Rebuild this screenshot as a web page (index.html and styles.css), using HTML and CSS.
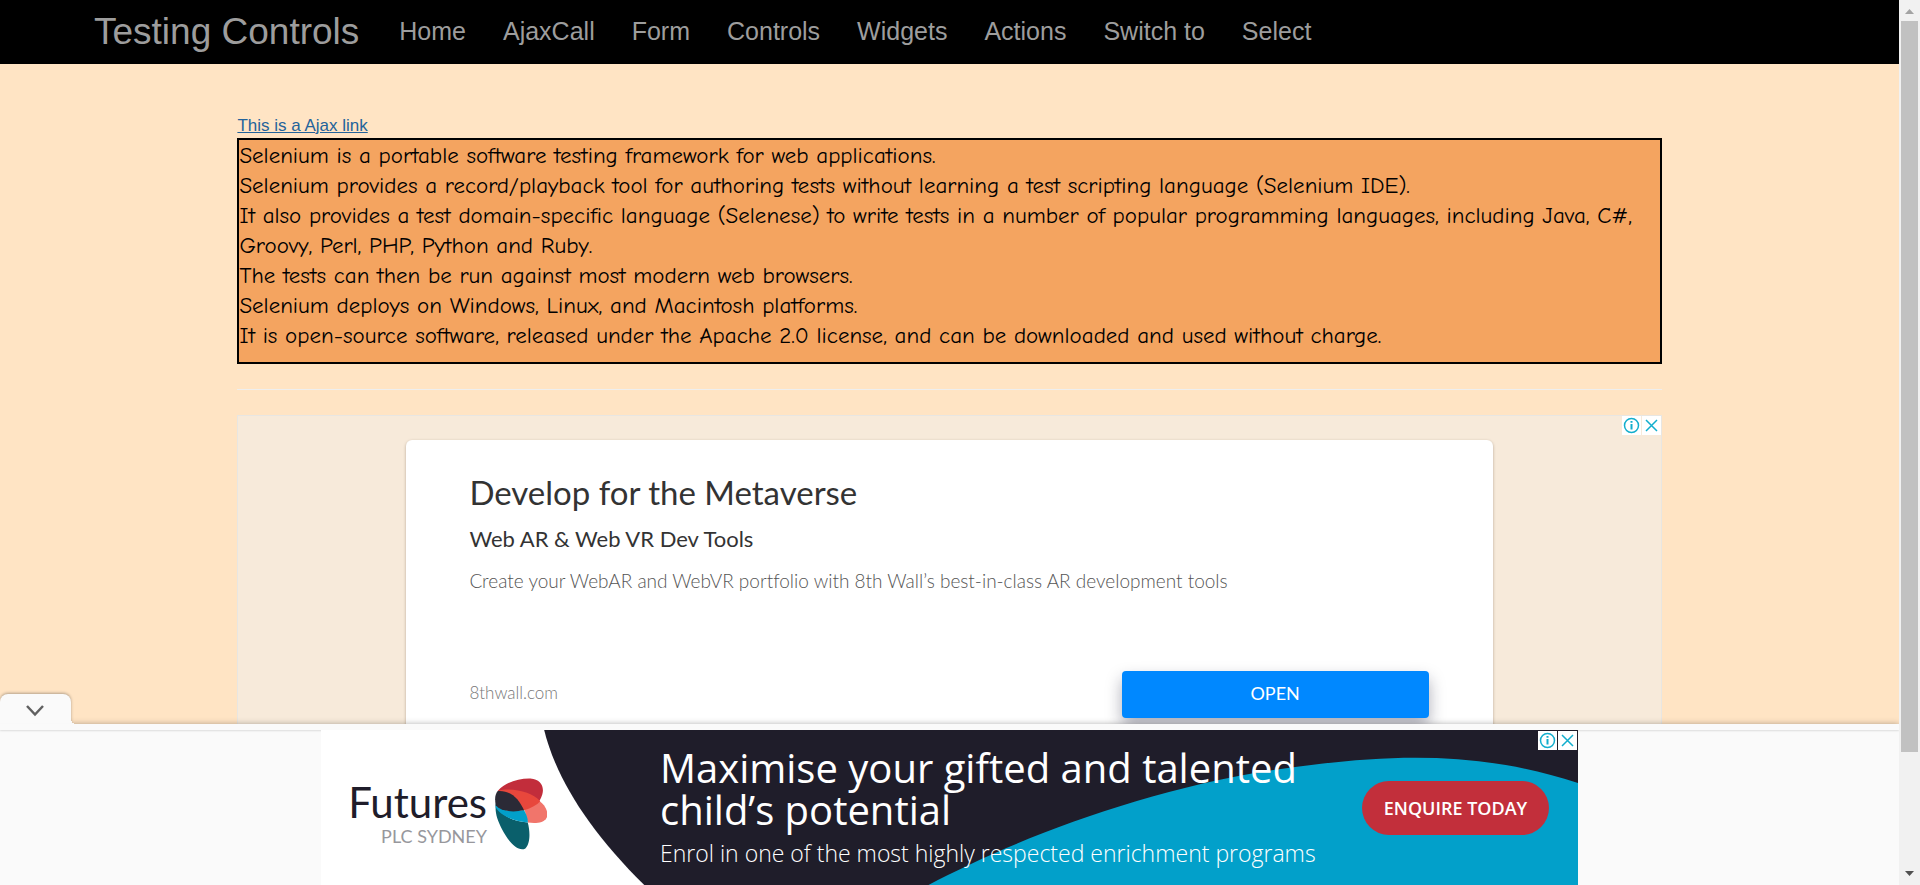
FILE: index.html
```html
<!DOCTYPE html>
<html lang="en">
<head>
<meta charset="utf-8">
<title>Testing Controls</title>
<link rel="stylesheet" href="styles.css">
</head>
<body>
<div class="window">
  <div class="page">
    <nav class="navbar">
      <a class="brand" href="#">Testing Controls</a>
      <ul class="menu">
        <li><a href="#">Home</a></li>
        <li><a href="#">AjaxCall</a></li>
        <li><a href="#">Form</a></li>
        <li><a href="#">Controls</a></li>
        <li><a href="#">Widgets</a></li>
        <li><a href="#">Actions</a></li>
        <li><a href="#">Switch to</a></li>
        <li><a href="#">Select</a></li>
      </ul>
    </nav>

    <main class="content">
      <a class="ajax-link" href="#">This is a Ajax link</a>
      <div class="result">
        Selenium is a portable software testing framework for web applications.<br>
        Selenium provides a record/playback tool for authoring tests without learning a test scripting language (Selenium IDE).<br>
        It also provides a test domain-specific language (Selenese) to write tests in a number of popular programming languages, including Java, C#,<br>
        Groovy, Perl, PHP, Python and Ruby.<br>
        The tests can then be run against most modern web browsers.<br>
        Selenium deploys on Windows, Linux, and Macintosh platforms.<br>
        It is open-source software, released under the Apache 2.0 license, and can be downloaded and used without charge.
      </div>
      <hr class="rule">

      <section class="ad">
        <div class="badges">
          <button class="badge" aria-label="About this ad"><svg viewBox="0 0 19 19"><circle cx="9.5" cy="9.5" r="7" /><path d="M9.500 8v5.500M9.500 5v1.800" stroke-width="2"/></svg></button>
          <button class="badge" aria-label="Close ad"><svg viewBox="0 0 19 19"><path d="M4 4l11 11M15 4l-11 11"/></svg></button>
        </div>
        <article class="card">
          <h2 class="card-title">Develop for the Metaverse</h2>
          <h3 class="card-subtitle">Web AR &amp; Web VR Dev Tools</h3>
          <p class="card-text">Create your WebAR and WebVR portfolio with 8th Wall’s best-in-class AR development tools</p>
          <div class="card-foot">
            <span class="card-site">8thwall.com</span>
            <button class="open">OPEN</button>
          </div>
        </article>
      </section>
    </main>

    <footer class="anchor">
      <button class="tab" aria-label="Collapse ad"><svg viewBox="0 0 20 14"><path d="M2 2l8 8.500 8-8.500"/></svg></button>
      <div class="anchor-edge"></div>
      <div class="banner">
        <svg class="banner-art" viewBox="321 730 1256 155" preserveAspectRatio="none" aria-hidden="true">
          <path fill="#1f1d2a" d="M544 730C556 779 590 832 644 885H1577V730Z"/>
          <path fill="#02a0ca" d="M928 885C1005 844 1140 789 1280 769C1390 753 1480 751 1577 783V885Z"/>
        </svg>
        <div class="logo">
          <div class="logo-words">
            <span class="logo-name">Futures</span>
            <span class="logo-place">PLC SYDNEY</span>
          </div>
          <svg class="emblem" viewBox="0 0 154 212" aria-hidden="true">
            <path fill="#f1756b" d="M88 95L130 66C150 80 160 103 153 117C144 134 117 134 97 131Z"/>
            <path fill="#c22d3b" d="M8 38C30 12 70 0 105 1C135 3 147 25 140 48C136 60 132 66 130 70L60 45Z"/>
            <path fill="#e8473c" d="M8 38C50 25 112 42 134 68C124 79 108 88 86 96C68 90 50 60 8 38Z"/>
            <path fill="#0a5f6b" d="M2 80C20 110 50 128 97 131C105 160 104 195 90 208C70 220 40 190 20 150C8 125 0 105 2 80Z"/>
            <path fill="#02a0ca" d="M2 76C25 100 50 100 86 94C94 110 98 120 97 131C50 127 15 109 2 86Z"/>
            <path fill="#2b2a36" d="M8 38C45 35 70 60 86 95C50 102 18 98 2 80C-1 60 0 48 8 38Z"/>
          </svg>
        </div>
        <div class="copy">
          <p class="headline">Maximise your gifted and talented<br>child’s potential</p>
          <p class="tagline">Enrol in one of the most highly respected enrichment programs</p>
        </div>
        <button class="enquire">ENQUIRE TODAY</button>
        <div class="badges">
          <button class="badge" aria-label="About this ad"><svg viewBox="0 0 19 19"><circle cx="9.5" cy="9.5" r="7" /><path d="M9.500 8v5.500M9.500 5v1.800" stroke-width="2"/></svg></button>
          <button class="badge" aria-label="Close ad"><svg viewBox="0 0 19 19"><path d="M4 4l11 11M15 4l-11 11"/></svg></button>
        </div>
      </div>
    </footer>
  </div>

  <div class="scrollbar" aria-hidden="true">
    <svg class="arrow" viewBox="0 0 21 21"><path fill="#a3a3a3" d="M6 14h9l-4.500-5z"/></svg>
    <div class="track"><div class="thumb"></div></div>
    <svg class="arrow" viewBox="0 0 21 21"><path fill="#505050" d="M6 7h9l-4.500 5z"/></svg>
  </div>
</div>
</body>
</html>
```

FILE: styles.css
```css
* { box-sizing: border-box; }

body {
  margin: 0;
  background: #ffe4c4;
  font-family: "Liberation Sans", Arial, sans-serif;
}

button {
  border: 0;
  padding: 0;
  font: inherit;
  cursor: pointer;
}

h2, h3, p { margin: 0; }

.window {
  display: flex;
  height: 100vh;
}

.page {
  position: relative;
  flex: 1;
  min-width: 0;
  display: flex;
  flex-direction: column;
  overflow: hidden;
}

/* Navigation */
.navbar {
  flex: none;
  display: flex;
  align-items: flex-start;
  gap: 40px;
  height: 64px;
  padding-left: 94px;
  background: #000;
}

.navbar a {
  color: #9d9d9d;
  text-decoration: none;
}

.brand {
  font-size: 37px;
  line-height: 64px;
}

.menu {
  display: flex;
  gap: 37px;
  margin: 0;
  padding: 0;
  list-style: none;
  font-size: 25px;
  line-height: 62px;
}

/* Main column */
.content {
  flex: 1;
  min-height: 0;
  display: flex;
  flex-direction: column;
  padding: 49px 12.5% 0;
  overflow: hidden;
}

.ajax-link {
  align-self: flex-start;
  font-size: 17px;
  line-height: 25px;
  color: #23639b;
  text-decoration: underline;
}

.result {
  flex: none;
  padding: 1px 0 11px;
  border: 2px solid #000;
  background: #f4a460;
  color: #000;
  font-family: "Comic Sans MS", "Comic Neue", "Noto Sans", sans-serif;
  font-size: 23px;
  font-variant-ligatures: none;
  line-height: 30px;
  white-space: nowrap;
}

.rule {
  flex: none;
  width: 100%;
  height: 1px;
  margin: 25px 0;
  border: 0;
  background: #eee;
}

/* In-page advert */
.ad {
  position: relative;
  flex: 1 0 auto;
  padding: 24px 168px 0;
  border: 1px solid #e8e6e2;
  background: #f7eada;
}

.badges {
  position: absolute;
  top: 0;
  right: 0;
  display: flex;
  gap: 1px;
}

.badge {
  width: 19px;
  height: 19px;
  background: #fff;
}

.badge svg {
  display: block;
  fill: none;
  stroke: #12aecd;
  stroke-width: 1.500;
}

.card {
  height: 100%;
  min-height: 300px;
  padding: 32px 64px 32px 63px;
  border-radius: 6px;
  background: #fff;
  box-shadow: 0 1px 3px rgba(60, 40, 20, 0.35);
  font-family: Lato, "Open Sans", sans-serif;
  font-variant-ligatures: none;
  color: #333;
}

.card-title {
  font-size: 33px;
  font-weight: 400;
  line-height: 40px;
}

.card-subtitle {
  margin-top: 12px;
  font-size: 22px;
  font-weight: 400;
  line-height: 30px;
}

.card-text {
  margin-top: 12px;
  font-size: 19px;
  font-weight: 300;
  line-height: 30px;
  color: #555;
}

.card-foot {
  display: flex;
  align-items: center;
  justify-content: space-between;
  margin-top: 75px;
}

.card-site {
  padding-bottom: 4px;
  font-size: 17px;
  font-weight: 300;
  color: #777;
}

.open {
  width: 307px;
  height: 47px;
  padding-bottom: 4px;
  border-radius: 4px;
  background: #08f;
  box-shadow: 0 8px 16px rgba(20, 20, 50, 0.35);
  color: #fff;
  font-size: 18px;
}

/* Bottom advert */
.anchor {
  position: relative;
  flex: none;
  background: #fafafa;
  box-shadow: 0 0 6px rgba(0, 0, 0, 0.3);
}

.tab {
  position: absolute;
  left: 0;
  bottom: 100%;
  display: grid;
  place-items: center;
  width: 71px;
  height: 30px;
  padding: 4px 2px 0 0;
  border-radius: 8px 8px 0 0;
  background: #fafafa;
  box-shadow: 0 -1px 3px rgba(0, 0, 0, 0.3);
}

/* Concave foot where the tab meets the bar */
.tab::after {
  content: "";
  position: absolute;
  left: 100%;
  bottom: 0;
  width: 5px;
  height: 5px;
  background: radial-gradient(circle at 100% 0, transparent 5px, #fafafa 5px);
}

.tab svg {
  width: 20px;
  fill: none;
  stroke: #616161;
  stroke-width: 2.500;
}

.anchor-edge {
  position: relative;
  height: 6px;
  background: #fafafa;
  box-shadow: 0 1px 2px rgba(0, 0, 0, 0.12);
}

.banner {
  position: relative;
  display: flex;
  align-items: flex-start;
  max-width: 1257px;
  height: 155px;
  margin: 0 auto;
  background: #fff;
  font-family: "Open Sans", "Noto Sans", sans-serif;
}

.banner-art {
  position: absolute;
  inset: 0;
  width: 100%;
  height: 100%;
}

.logo {
  position: relative;
  display: flex;
  gap: 8px;
  width: 339px;
  padding: 48px 0 0 27px;
}

.logo-words {
  display: flex;
  flex-direction: column;
  align-items: flex-end;
  width: 139px;
}

.logo-name {
  font-family: Lato, sans-serif;
  font-size: 42px;
  line-height: 48px;
  color: #1f1d2a;
}

.logo-place {
  font-family: Lato, sans-serif;
  font-size: 18px;
  line-height: 20px;
  color: #97979c;
}

.emblem {
  width: 52px;
  height: 72px;
}

.copy {
  position: relative;
  flex: 1;
  padding-top: 17px;
  color: #fff;
  white-space: nowrap;
}

.headline {
  font-size: 40px;
  line-height: 42px;
}

.tagline {
  margin-top: 5px;
  font-size: 23px;
  font-weight: 300;
  line-height: 34px;
}

.enquire {
  position: relative;
  width: 187px;
  height: 54px;
  margin: 51px 29px 0 0;
  border-radius: 27px;
  background: #c22f3b;
  color: #fff;
  font-size: 18px;
  font-weight: 600;
}

.banner .badges {
  top: 1px;
  right: 1px;
}

/* Scrollbar */
.scrollbar {
  flex: none;
  display: flex;
  flex-direction: column;
  width: 21px;
  background: #f1f1f1;
}

.arrow {
  width: 21px;
  height: 21px;
}

.track { flex: 1; }

.thumb {
  width: 17px;
  height: 86.700%;
  margin-left: 2px;
  background: #c1c1c1;
}
```
